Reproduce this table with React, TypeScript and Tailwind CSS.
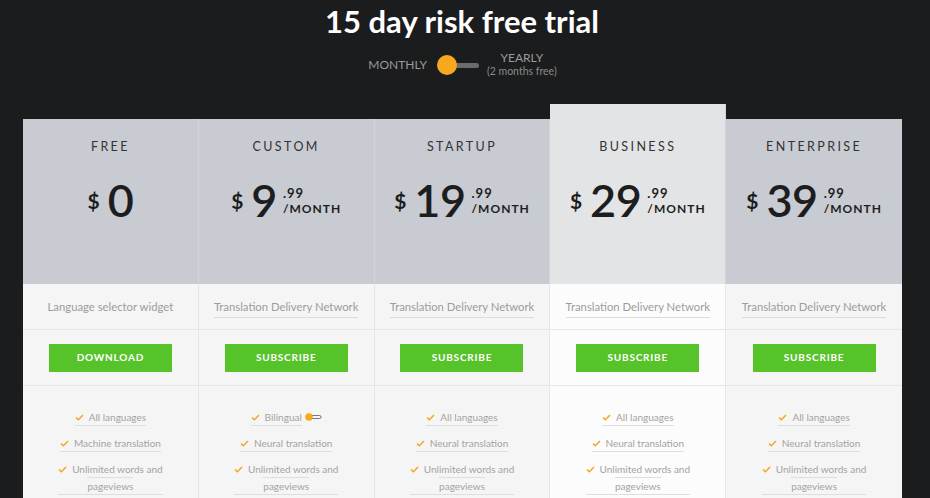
import React from "react";

type Plan = {
  name: string;
  price: string;
  cents?: boolean;
  desc: string;
  descLine: boolean;
  button: string;
  features: string[];
  bilingual?: boolean;
  featured?: boolean;
};

const plans: Plan[] = [
  {
    name: "FREE",
    price: "0",
    desc: "Language selector widget",
    descLine: false,
    button: "DOWNLOAD",
    features: ["All languages", "Machine translation", "Unlimited words and pageviews"],
  },
  {
    name: "CUSTOM",
    price: "9",
    cents: true,
    desc: "Translation Delivery Network",
    descLine: true,
    button: "SUBSCRIBE",
    features: ["Bilingual", "Neural translation", "Unlimited words and pageviews"],
    bilingual: true,
  },
  {
    name: "STARTUP",
    price: "19",
    cents: true,
    desc: "Translation Delivery Network",
    descLine: true,
    button: "SUBSCRIBE",
    features: ["All languages", "Neural translation", "Unlimited words and pageviews"],
  },
  {
    name: "BUSINESS",
    price: "29",
    cents: true,
    desc: "Translation Delivery Network",
    descLine: true,
    button: "SUBSCRIBE",
    features: ["All languages", "Neural translation", "Unlimited words and pageviews"],
    featured: true,
  },
  {
    name: "ENTERPRISE",
    price: "39",
    cents: true,
    desc: "Translation Delivery Network",
    descLine: true,
    button: "SUBSCRIBE",
    features: ["All languages", "Neural translation", "Unlimited words and pageviews"],
  },
];

function Check() {
  return (
    <svg width="9" height="7" viewBox="0 0 9 7" className="inline-block mr-[5px] -mt-[2px]">
      <path d="M1 3.6 L3.4 5.8 L8 1" fill="none" stroke="#f5a623" strokeWidth="1.5" />
    </svg>
  );
}

function Slider() {
  return (
    <svg width="17" height="8" viewBox="0 0 17 8" className="inline-block ml-[3px] -mt-[2px]">
      <rect x="5" y="2.5" width="11" height="3" rx="1.5" fill="none" stroke="#555" strokeWidth="0.8" />
      <circle cx="4" cy="4" r="3.8" fill="#f7a81c" />
    </svg>
  );
}

function Column({ plan, last }: { plan: Plan; last: boolean }) {
  const sep = last ? "" : "border-r border-[#e6e6e6]";
  return (
    <div className="flex flex-col">
      <div
        className={`flex flex-col items-center ${
          plan.featured ? "bg-[#e3e4e6] h-[180px] pt-[36px]" : "bg-[#c8cbd1] h-[165px] pt-[21px]"
        } ${last ? "" : "border-r border-[#d2d4d9]"}`}
      >
        <div className="text-[12.5px] tracking-[2.4px] text-[#333] leading-[14px]">{plan.name}</div>
        <div className="flex items-center mt-[22px] text-[#1d1d1f]">
          <span className="text-[21px] font-bold mr-[8px] mt-[1px]">$</span>
          <span className="text-[45px] font-semibold leading-[48px] tracking-[-0.5px]">{plan.price}</span>
          {plan.cents && (
            <span className="flex flex-col ml-[6px] mt-[2px] leading-[15px]">
              <span className="text-[13px] font-bold tracking-[1px]">.99</span>
              <span className="text-[12px] font-bold tracking-[1px]">/MONTH</span>
            </span>
          )}
        </div>
      </div>
      <div className={`${plan.featured ? "bg-[#fcfcfc]" : "bg-[#f5f5f5]"} ${sep}`}>
        <div className="h-[46px] flex items-center justify-center border-b border-[#e6e6e6]">
          <span
            className={`text-[11.3px] text-[#9c9c9c] leading-[16px] ${
              plan.descLine ? "border-b border-[#dcdcdc] pb-[2px] mt-[4px]" : ""
            }`}
          >
            {plan.desc}
          </span>
        </div>
        <div className="h-[56px] flex items-center justify-center border-b border-[#e6e6e6]">
          <div className="w-[123px] h-[28px] bg-[#56c32a] text-white text-[10px] font-bold tracking-[0.8px] flex items-center justify-center">
            {plan.button}
          </div>
        </div>
        <div className="flex flex-col items-center pt-[23px] pb-[20px] gap-[9px]">
          {plan.features.map((f, i) => (
            <div key={f} className="flex items-center">
              <span className="text-[10px] text-[#a3a3a3] leading-[16px] text-center max-w-[112px] border-b border-[#dedede]">
                <Check />
                {i === 2 ? (
                  <>
                    Unlimited words and
                    <br />
                    <span className="border-t border-[#dedede] inline-block">pageviews</span>
                  </>
                ) : (
                  f
                )}
              </span>
              {plan.bilingual && i === 0 && <Slider />}
            </div>
          ))}
        </div>
      </div>
    </div>
  );
}

export default function App() {
  return (
    <div
      className="w-[930px] h-[498px] overflow-hidden bg-[#1b1c1e]"
      style={{ fontFamily: "Lato, 'Open Sans', Arial, sans-serif" }}
    >
      <h1 className="text-center text-white text-[31px] font-bold leading-[36px] pt-[3px] pr-[6px]">
        15 day risk free trial
      </h1>
      <div className="flex items-center justify-center mt-[14px] pr-[5px]">
        <span className="text-[12px] text-[#9a9a9a] mr-[10px]">MONTHLY</span>
        <div className="relative w-[42px] h-[20px] flex items-center">
          <div className="absolute left-[10px] right-[0px] h-[5px] rounded-full bg-[#6b6b6b]" />
          <div className="absolute left-0 w-[20px] h-[20px] rounded-full bg-[#f7a81c]" />
        </div>
        <div className="flex flex-col items-center ml-[8px] -mt-[2px]">
          <span className="text-[12px] text-[#9a9a9a] leading-[14px]">YEARLY</span>
          <span className="text-[10.5px] text-[#8a8a8a] leading-[12px]">(2 months free)</span>
        </div>
      </div>
      <div className="ml-[23px] mt-[27px] w-[879px] grid grid-cols-5 items-end">
        {plans.map((p, i) => (
          <Column key={p.name} plan={p} last={i === plans.length - 1} />
        ))}
      </div>
    </div>
  );
}
